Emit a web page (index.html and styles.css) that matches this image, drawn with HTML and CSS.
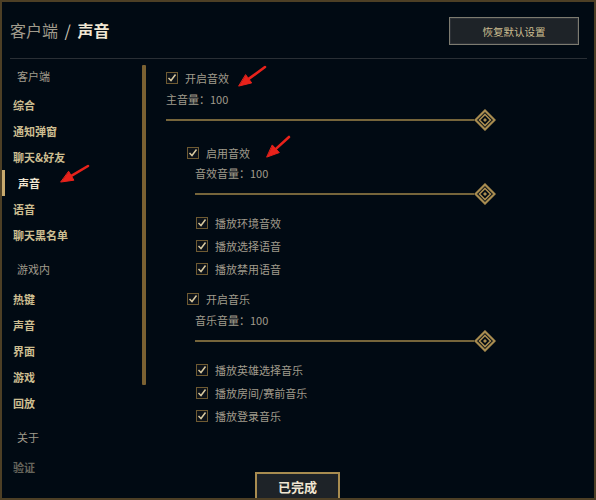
FILE: index.html
```html
<!DOCTYPE html>
<html lang="zh-CN">
<head>
<meta charset="UTF-8">
<title>客户端 / 声音</title>
<link rel="stylesheet" href="styles.css">
</head>
<body>
<div class="frame">
    <div class="header">
        <div class="title"><span class="crumb">客户端</span> <span class="slash">/</span> <b>声音</b></div>
        <button class="btn-reset">恢复默认设置</button>
    </div>
    <div class="divider"></div>

    <div class="main">
        <div class="sidebar">
            <div class="nav-head">客户端</div>
            <div class="nav-item">综合</div>
            <div class="nav-item">通知弹窗</div>
            <div class="nav-item">聊天&amp;好友</div>
            <div class="nav-item active">声音</div>
            <div class="nav-item">语音</div>
            <div class="nav-item">聊天黑名单</div>
            <div class="nav-head gap">游戏内</div>
            <div class="nav-item">热键</div>
            <div class="nav-item">声音</div>
            <div class="nav-item">界面</div>
            <div class="nav-item">游戏</div>
            <div class="nav-item">回放</div>
            <div class="nav-head gap">关于</div>
            <div class="nav-item faded">验证</div>
        </div>
        <div class="scrollbar"></div>

        <div class="content">
            <label class="check top"><span class="box"><svg width="12" height="12" viewBox="0 0 12 12"><rect x="0.5" y="0.5" width="11" height="11" fill="#0b1118" stroke="#6e5a32"/><polyline points="2.5,6 5,8.5 9.5,2.5" fill="none" stroke="#d8c9a0" stroke-width="1.5"/></svg></span>开启音效</label>
            <div class="vol">主音量：100</div>
            <div class="slider"><span class="track"></span><svg class="thumb" width="22" height="22" viewBox="0 0 22 22"><polygon points="11,1.5 20.5,11 11,20.5 1.5,11" fill="#010a13" stroke="#a88c50" stroke-width="2.2"/><polygon points="11,5.5 16.5,11 11,16.5 5.5,11" fill="none" stroke="#a88c50" stroke-width="1.6"/><polygon points="11,9 13,11 11,13 9,11" fill="#a88c50"/></svg></div>

            <div class="group">
                <label class="check"><span class="box"><svg width="12" height="12" viewBox="0 0 12 12"><rect x="0.5" y="0.5" width="11" height="11" fill="#0b1118" stroke="#6e5a32"/><polyline points="2.5,6 5,8.5 9.5,2.5" fill="none" stroke="#d8c9a0" stroke-width="1.5"/></svg></span>启用音效</label>
                <div class="inner">
                    <div class="vol">音效音量：100</div>
                    <div class="slider"><span class="track"></span><svg class="thumb" width="22" height="22" viewBox="0 0 22 22"><polygon points="11,1.5 20.5,11 11,20.5 1.5,11" fill="#010a13" stroke="#a88c50" stroke-width="2.2"/><polygon points="11,5.5 16.5,11 11,16.5 5.5,11" fill="none" stroke="#a88c50" stroke-width="1.6"/><polygon points="11,9 13,11 11,13 9,11" fill="#a88c50"/></svg></div>
                    <div class="subs">
                        <label class="check sub"><span class="box"><svg width="12" height="12" viewBox="0 0 12 12"><rect x="0.5" y="0.5" width="11" height="11" fill="#0b1118" stroke="#6e5a32"/><polyline points="2.5,6 5,8.5 9.5,2.5" fill="none" stroke="#d8c9a0" stroke-width="1.5"/></svg></span>播放环境音效</label>
                        <label class="check sub"><span class="box"><svg width="12" height="12" viewBox="0 0 12 12"><rect x="0.5" y="0.5" width="11" height="11" fill="#0b1118" stroke="#6e5a32"/><polyline points="2.5,6 5,8.5 9.5,2.5" fill="none" stroke="#d8c9a0" stroke-width="1.5"/></svg></span>播放选择语音</label>
                        <label class="check sub"><span class="box"><svg width="12" height="12" viewBox="0 0 12 12"><rect x="0.5" y="0.5" width="11" height="11" fill="#0b1118" stroke="#6e5a32"/><polyline points="2.5,6 5,8.5 9.5,2.5" fill="none" stroke="#d8c9a0" stroke-width="1.5"/></svg></span>播放禁用语音</label>
                    </div>
                </div>
            </div>

            <div class="group music">
                <label class="check"><span class="box"><svg width="12" height="12" viewBox="0 0 12 12"><rect x="0.5" y="0.5" width="11" height="11" fill="#0b1118" stroke="#6e5a32"/><polyline points="2.5,6 5,8.5 9.5,2.5" fill="none" stroke="#d8c9a0" stroke-width="1.5"/></svg></span>开启音乐</label>
                <div class="inner">
                    <div class="vol">音乐音量：100</div>
                    <div class="slider"><span class="track"></span><svg class="thumb" width="22" height="22" viewBox="0 0 22 22"><polygon points="11,1.5 20.5,11 11,20.5 1.5,11" fill="#010a13" stroke="#a88c50" stroke-width="2.2"/><polygon points="11,5.5 16.5,11 11,16.5 5.5,11" fill="none" stroke="#a88c50" stroke-width="1.6"/><polygon points="11,9 13,11 11,13 9,11" fill="#a88c50"/></svg></div>
                    <div class="subs">
                        <label class="check sub"><span class="box"><svg width="12" height="12" viewBox="0 0 12 12"><rect x="0.5" y="0.5" width="11" height="11" fill="#0b1118" stroke="#6e5a32"/><polyline points="2.5,6 5,8.5 9.5,2.5" fill="none" stroke="#d8c9a0" stroke-width="1.5"/></svg></span>播放英雄选择音乐</label>
                        <label class="check sub"><span class="box"><svg width="12" height="12" viewBox="0 0 12 12"><rect x="0.5" y="0.5" width="11" height="11" fill="#0b1118" stroke="#6e5a32"/><polyline points="2.5,6 5,8.5 9.5,2.5" fill="none" stroke="#d8c9a0" stroke-width="1.5"/></svg></span>播放房间/赛前音乐</label>
                        <label class="check sub"><span class="box"><svg width="12" height="12" viewBox="0 0 12 12"><rect x="0.5" y="0.5" width="11" height="11" fill="#0b1118" stroke="#6e5a32"/><polyline points="2.5,6 5,8.5 9.5,2.5" fill="none" stroke="#d8c9a0" stroke-width="1.5"/></svg></span>播放登录音乐</label>
                    </div>
                </div>
            </div>
        </div>
    </div>

    <button class="btn-done">已完成</button>

    <!-- red annotation arrows -->
    <svg class="arrows" width="596" height="500" viewBox="0 0 596 500">
        <g fill="#e8221b" stroke="#e8221b" stroke-linecap="round">
            <line x1="265" y1="67" x2="248.7" y2="78.9" stroke-width="2.6"/>
            <polygon points="239,86 251.7,82.9 245.8,74.9" stroke-width="1"/>
            <line x1="289" y1="137" x2="275.9" y2="148.9" stroke-width="2.6"/>
            <polygon points="267,157 279.3,152.6 272.5,145.2" stroke-width="1"/>
            <line x1="88" y1="166" x2="71.3" y2="175.9" stroke-width="2.6"/>
            <polygon points="61,182 73.9,180.2 68.8,171.6" stroke-width="1"/>
        </g>
    </svg>
</div>
</body>
</html>
```

FILE: styles.css
```css
body {
    margin: 0;
    background-color: #010a13;
    font-family: "Noto Sans CJK SC", "Noto Sans", sans-serif;
}

.frame {
    position: relative;
    width: 596px;
    height: 500px;
    box-sizing: border-box;
    border: 2px solid #4d3f25;
    background-color: #010a13;
    overflow: hidden;
}

.header {
    height: 56px;
    display: flex;
    align-items: center;
    justify-content: space-between;
    padding: 2px 15px 0 8px;
    box-sizing: border-box;
}

.title {
    font-size: 16px;
    color: #f0e6d2;
    line-height: 20px;
    margin-top: -2px;
}

.title .crumb {
    color: #a09b8c;
}

.title .slash {
    color: #cfc8b8;
    margin: 0 3px;
}

.btn-reset {
    width: 130px;
    height: 28px;
    background-color: #1e2328;
    border: 1px solid #7d7b70;
    box-shadow: inset 0 0 0 1px #2c3036;
    color: #cdbe91;
    font-family: inherit;
    font-size: 10.5px;
    padding: 0;
}

.divider {
    height: 1px;
    background-color: #2a2f35;
    margin: 0 7px 0 8px;
}

.main {
    display: flex;
}

.sidebar {
    width: 129px;
    padding: 4px 0 0 11px;
}

.nav-head {
    height: 26px;
    line-height: 26px;
    font-size: 11px;
    color: #a09b8c;
    padding-left: 4px;
    margin-bottom: 3px;
}

.nav-head.gap {
    margin-top: 8px;
    margin-bottom: 4px;
}

.nav-item {
    position: relative;
    height: 26px;
    line-height: 26px;
    font-size: 11px;
    font-weight: bold;
    color: #cdbe91;
}

.nav-item.active {
    color: #f0e6d2;
    padding-left: 5px;
}

.nav-item.active::before {
    content: "";
    position: absolute;
    left: -11px;
    top: 0;
    width: 3px;
    height: 26px;
    background-color: #c8aa6e;
}

.nav-item.faded {
    color: #66655c;
}

.scrollbar {
    width: 4px;
    height: 320px;
    margin-top: 6px;
    background-color: #7a6132;
    border-radius: 1px;
}

.content {
    flex: 1;
    padding: 9px 98px 0 20px;
    font-size: 11px;
    color: #a09b8c;
}

.check {
    display: flex;
    align-items: center;
    height: 20px;
}

.check .box {
    display: flex;
    width: 12px;
    margin-right: 7px;
}

.check.sub {
    height: 22.7px;
}

.vol {
    height: 20px;
    line-height: 20px;
    margin-top: 1px;
}

.slider {
    display: flex;
    align-items: center;
    height: 22px;
}

.track {
    flex: 1;
    height: 2px;
    background-color: #76653b;
}

.thumb {
    display: block;
}

.group {
    margin: 12px 0 0 21px;
}

.group.music {
    margin-top: 9px;
}

.group .vol {
    margin-top: 0;
}

.music .vol {
    margin-top: 1px;
}

.inner {
    padding-left: 8px;
}

.subs {
    margin-top: 7px;
    padding-left: 1px;
}

.btn-done {
    position: absolute;
    left: 253px;
    top: 470px;
    width: 85px;
    height: 34px;
    padding: 0 0 6px 0;
    background-color: #1e2328;
    border: 2px solid #a88c50;
    color: #f0e6d2;
    font-family: inherit;
    font-size: 13px;
    font-weight: bold;
}

.arrows {
    position: absolute;
    left: -2px;
    top: -2px;
    pointer-events: none;
}
```
